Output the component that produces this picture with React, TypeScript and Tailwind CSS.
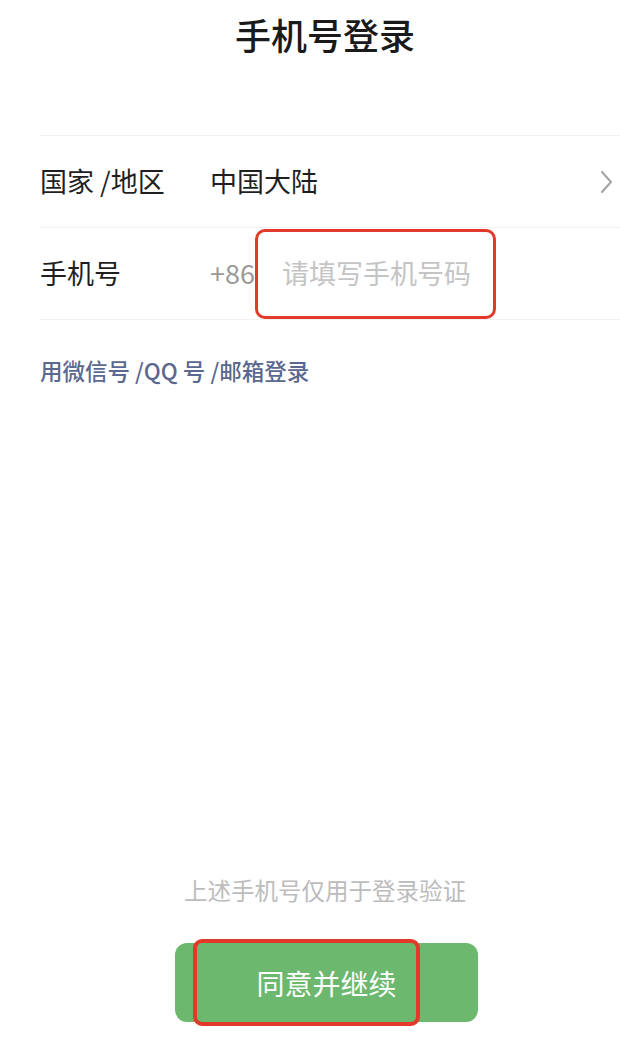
import React from "react";

export default function App() {
  return (
    <div
      className="w-[620px] h-[1047px] bg-white flex flex-col overflow-hidden"
      style={{ fontFamily: '"Noto Sans CJK SC", "Noto Sans", sans-serif' }}
    >
      <div className="h-[68px] pl-[30px] flex items-center justify-center text-[36px] font-medium text-[#1a1a1a] leading-none">
        手机号登录
      </div>

      <div className="mt-[67px] pl-[40px]">
        <div className="h-px bg-[#f1f1f1]" />
        <div className="h-[91px] flex items-center text-[27px] text-[#1f1f1f]">
          <div className="w-[170px]">国家 /地区</div>
          <div className="flex-1">中国大陆</div>
          <svg width="14" height="24" viewBox="0 0 14 24" className="mr-[6px]">
            <path d="M2 2 L11 12 L2 22" fill="none" stroke="#a6a6a6" strokeWidth="2.2" strokeLinecap="round" strokeLinejoin="round" />
          </svg>
        </div>
        <div className="h-px bg-[#f1f1f1]" />
        <div className="h-[91px] flex items-center text-[27px] text-[#1f1f1f]">
          <div className="w-[170px]">手机号</div>
          <div className="text-[#9a9a9a] w-[46px]">+86</div>
          <div className="h-[90px] w-[241px] border-[3px] border-[#e2392a] rounded-[10px] flex items-center pl-[24px] text-[#c4c4c4] -ml-[1px]">
            请填写手机号码
          </div>
        </div>
        <div className="h-px bg-[#f1f1f1]" />
      </div>

      <div className="mt-[35px] pl-[40px] text-[22.5px] leading-[30px] font-medium text-[#5b6890]">
        用微信号 /QQ 号 /邮箱登录
      </div>

      <div className="flex-1" />

      <div className="pl-[30px] text-center text-[23.5px] leading-[30px] text-[#bcbcbc]">
        上述手机号仅用于登录验证
      </div>

      <div className="mt-[38px] mb-[25px] pl-[30px] flex justify-center">
        <div className="relative w-[303px] h-[79px] ml-[3px] bg-[#6cb86e] rounded-[12px] flex items-center justify-center text-[28px] text-white">
          同意并继续
          <div className="absolute left-[18px] top-[-4px] w-[227px] h-[87px] border-[4px] border-[#e2392a] rounded-[9px]" />
        </div>
      </div>
    </div>
  );
}
